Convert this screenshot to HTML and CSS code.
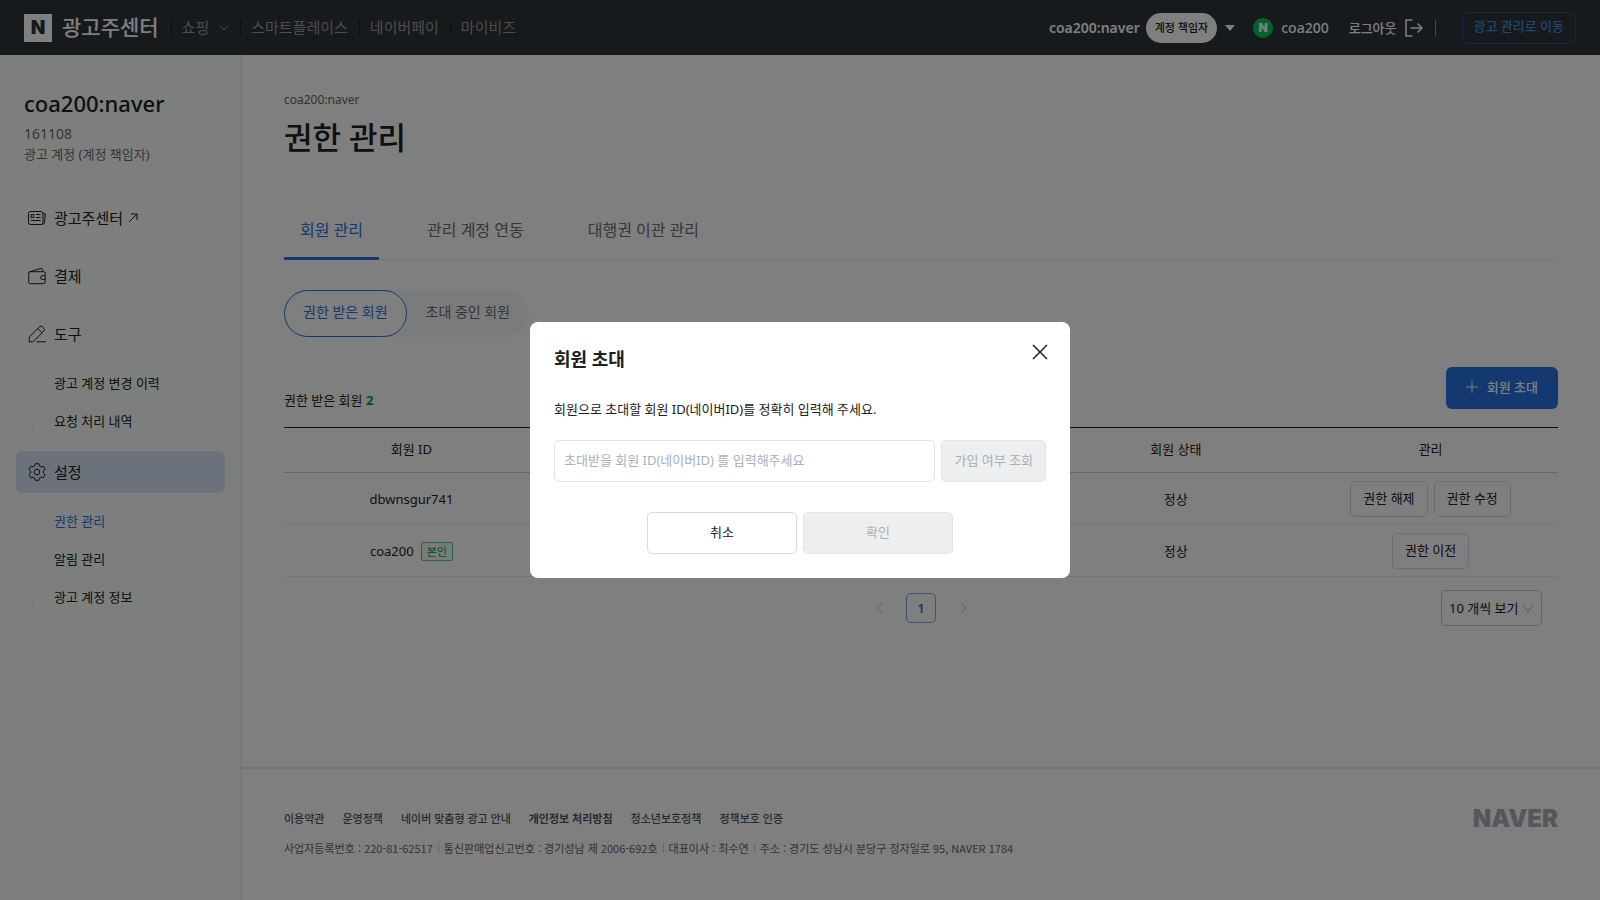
FILE: index.html
```html
<!DOCTYPE html>
<html lang="ko">
<head>
  <meta charset="UTF-8">
  <meta name="viewport" content="width=device-width, initial-scale=1.0">
  <title>권한 관리 - 광고주센터</title>
  <link rel="stylesheet" href="styles.css">
</head>
<body>
  <header class="topbar">
    <a class="logo" href="#"><span class="logo-mark">N</span><span class="logo-text">광고주센터</span></a>
    <nav class="topnav">
      <a href="#">쇼핑 <svg width="10" height="6" viewBox="0 0 10 6"><path d="M.5.5 5 5 9.500.5"/></svg></a>
      <a href="#">스마트플레이스</a>
      <a href="#">네이버페이</a>
      <a href="#">마이비즈</a>
    </nav>
    <div class="account">
      <button class="account-switch" type="button">
        <span>coa200:naver</span>
        <span class="role">계정 책임자</span>
        <svg width="10" height="6" viewBox="0 0 10 6"><path d="M0 0h10L5 6z"/></svg>
      </button>
      <a class="user" href="#"><span class="user-mark">N</span>coa200</a>
      <a class="logout" href="#">로그아웃
        <svg width="18" height="18" viewBox="0 0 18 18"><path d="M7.500 1H1v16h6.500M5.500 9H17M12.500 4.500 17 9l-4.500 4.500"/></svg>
      </a>
      <span class="account-line"></span>
      <a class="btn-go" href="#">광고 관리로 이동</a>
    </div>
  </header>

  <div class="layout">
    <aside class="sidebar">
      <h2>coa200:naver</h2>
      <p>161108</p>
      <p class="account-type">광고 계정 (계정 책임자)</p>
      <nav class="menu">
        <a class="menu-item" href="#">
          <svg width="18" height="18" viewBox="0 0 18 18"><rect x=".5" y="2.500" width="14.500" height="13" rx="2"/><path d="M15 4.500l2.400.5-1 8.500a2.200 2.200 0 0 1-2 2M3 5.500h3v3H3zM8 5.500h4.500M8 8.500h4.500M3 11.500h9.500"/></svg>
          광고주센터
          <svg width="10" height="10" viewBox="0 0 10 10"><path d="M1 9 9 1M3 1h6v6"/></svg>
        </a>
        <a class="menu-item" href="#">
          <svg width="18" height="18" viewBox="0 0 18 18"><rect x=".7" y="4.700" width="16.500" height="12" rx="1.500"/><path d="M1 5l12-3.600a1 1 0 0 1 1.200.7l.7 2.400M17 8.700h-2.800a1.500 1.500 0 0 0-1.500 1.500v.6a1.500 1.500 0 0 0 1.500 1.500H17"/></svg>
          결제
        </a>
        <a class="menu-item" href="#">
          <svg width="18" height="18" viewBox="0 0 18 18"><path d="M1 16.800l.5-5L11.500 1.800a2 2 0 0 1 2.900 0l1.400 1.400a2 2 0 0 1 0 2.900L5.600 16.200q-.5.6-1.200.6zM9.800 3.600l4.200 4.200M8.500 16.800H18"/></svg>
          도구
        </a>
        <ul class="submenu">
          <li><a href="#">광고 계정 변경 이력</a></li>
          <li><a href="#">요청 처리 내역</a></li>
        </ul>
        <a class="menu-item on" href="#">
          <svg width="18" height="18" viewBox="0 0 18 18"><path d="M7.200 .7h3.600l.6 2.300 1.500.9 2.300-.7 1.800 3.100L15.300 8v2l1.700 1.700-1.800 3.100-2.300-.7-1.500.9-.6 2.300H7.200L6.600 15l-1.500-.9-2.300.7L1 11.700 2.700 10V8L1 6.300l1.800-3.100 2.300.7L6.600 3z"/><circle cx="9" cy="9" r="2.800"/></svg>
          설정
        </a>
        <ul class="submenu">
          <li><a class="on" href="#">권한 관리</a></li>
          <li><a href="#">알림 관리</a></li>
          <li><a href="#">광고 계정 정보</a></li>
        </ul>
      </nav>
    </aside>

    <div class="page">
      <main class="content">
        <p class="crumb">coa200:naver</p>
        <h1>권한 관리</h1>

        <nav class="tabs">
          <a class="on" href="#">회원 관리</a>
          <a href="#">관리 계정 연동</a>
          <a href="#">대행권 이관 관리</a>
        </nav>

        <div class="segment">
          <button class="on" type="button">권한 받은 회원</button>
          <button type="button">초대 중인 회원</button>
        </div>

        <div class="list-head">
          <p>권한 받은 회원 <strong>2</strong></p>
          <button class="btn-invite" type="button">
            <svg width="12" height="12" viewBox="0 0 12 12"><path d="M6 0v12M0 6h12"/></svg>
            회원 초대
          </button>
        </div>

        <table class="members">
          <thead>
            <tr><th>회원 ID</th><th></th><th></th><th>회원 상태</th><th>관리</th></tr>
          </thead>
          <tbody>
            <tr>
              <td>dbwnsgur741</td><td></td><td></td><td>정상</td>
              <td><div class="actions"><button class="btn-small" type="button">권한 해제</button><button class="btn-small" type="button">권한 수정</button></div></td>
            </tr>
            <tr>
              <td>coa200<span class="badge">본인</span></td><td></td><td></td><td>정상</td>
              <td><div class="actions"><button class="btn-small" type="button">권한 이전</button></div></td>
            </tr>
          </tbody>
        </table>

        <div class="paging">
          <div class="pages">
            <button type="button" aria-label="이전"><svg width="7" height="12" viewBox="0 0 7 12"><path d="M6.500.5 1 6l5.500 5.500"/></svg></button>
            <button class="on" type="button">1</button>
            <button type="button" aria-label="다음"><svg width="7" height="12" viewBox="0 0 7 12"><path d="M.5.5 6 6 .5 11.500"/></svg></button>
          </div>
          <div class="page-size">
            <select aria-label="페이지 크기"><option>10 개씩 보기</option></select>
            <svg width="10" height="7" viewBox="0 0 10 7"><path d="M.5.5 5 6.500 9.500.5"/></svg>
          </div>
        </div>
      </main>

      <footer class="footer">
        <div>
          <div class="footer-links">
            <a href="#">이용약관</a>
            <a href="#">운영정책</a>
            <a href="#">네이버 맞춤형 광고 안내</a>
            <a class="strong" href="#">개인정보 처리방침</a>
            <a href="#">청소년보호정책</a>
            <a href="#">정책보호 인증</a>
          </div>
          <div class="footer-info">
            <span>사업자등록번호 : 220-81-62517</span>
            <span>통신판매업신고번호 : 경기성남 제 2006-692호</span>
            <span>대표이사 : 최수연</span>
            <span>주소 : 경기도 성남시 분당구 정자일로 95, NAVER 1784</span>
          </div>
        </div>
        <span class="footer-logo">NAVER</span>
      </footer>
    </div>
  </div>

  <div class="overlay">
    <form class="modal" role="dialog" aria-labelledby="modal-title">
      <div class="modal-head">
        <h2 id="modal-title">회원 초대</h2>
        <button class="btn-close" type="button" aria-label="닫기"><svg width="16" height="16" viewBox="0 0 16 16"><path d="M1 1l14 14M15 1 1 15"/></svg></button>
      </div>
      <label for="member-id">회원으로 초대할 회원 ID(네이버ID)를 정확히 입력해 주세요.</label>
      <div class="modal-row">
        <input id="member-id" type="text" placeholder="초대받을 회원 ID(네이버ID) 를 입력해주세요">
        <button class="btn" type="button" disabled>가입 여부 조회</button>
      </div>
      <div class="modal-foot">
        <button class="btn" type="button">취소</button>
        <button class="btn" type="submit" disabled>확인</button>
      </div>
    </form>
  </div>
</body>
</html>
```
FILE: styles.css
```css
* { margin: 0; padding: 0; box-sizing: border-box; }
body { background: #fff; color: #202020; font: 13px/20px 'Noto Sans', 'Noto Sans CJK KR', sans-serif; min-height: 100vh; display: flex; flex-direction: column; }
a { color: inherit; text-decoration: none; }
ul { list-style: none; }
button, input, select { font: inherit; color: inherit; background: none; border: none; }
button { cursor: pointer; white-space: nowrap; }
svg { flex: none; fill: none; stroke: currentColor; }

/* top bar */
.topbar { background: #2f353b; color: #fff; height: 55px; padding: 0 24px; display: flex; align-items: center; white-space: nowrap; }
.logo { display: flex; align-items: center; gap: 10px; margin-right: 12px; }
.logo-mark { width: 28px; height: 28px; background: #fff; color: #2f353b; font: 900 19px/28px Inter, sans-serif; text-align: center; }
.logo-text { font-size: 21px; line-height: 26px; padding-bottom: 2px; font-weight: 500; }
.topnav { display: flex; align-items: center; color: #999; font-size: 15px; }
.topnav a { display: flex; align-items: center; gap: 10px; line-height: 15px; padding: 0 11px 0 10px; border-left: 1px solid #14181c; }
.account { margin-left: auto; display: flex; align-items: center; }
.account-switch { display: flex; align-items: center; font-size: 14px; font-weight: 600; }
.role { background: #fff; color: #202020; height: 30px; line-height: 29px; padding: 0 9px; margin: 0 8px 0 6px; border-radius: 15px; font-size: 11px; font-weight: 500; }
.account-switch svg { fill: #fff; stroke: none; }
.user { display: flex; align-items: center; gap: 8px; margin-left: 18px; font-size: 14px; font-weight: 500; }
.user-mark { width: 20px; height: 20px; border-radius: 50%; background: #00c45a; font: 900 12px/20px Inter, sans-serif; text-align: center; }
.logout { display: flex; align-items: center; gap: 8px; margin-left: 20px; font-weight: 500; }
.logout svg { stroke-width: 1.500; }
.account-line { width: 1px; height: 16px; background: #8f8f8f; margin: 0 26px 0 12px; }
.btn-go { height: 32px; line-height: 27px; padding: 0 11px; border: 1px solid #2a5580; border-radius: 5px; color: #3d8fe0; font-weight: 500; }

/* sidebar */
.layout { flex: 1; display: flex; }
.sidebar { flex: none; width: 242px; padding: 32px 16px; background: #f9fefb; border-right: 1px solid #dfe3ea; }
.sidebar h2 { padding: 0 8px; margin-bottom: 5px; font-size: 22px; line-height: 32px; font-weight: 500; }
.sidebar p { padding: 0 8px; font-size: 14px; color: #6c6c6c; white-space: nowrap; }
.sidebar .account-type { font-size: 13px; }
.menu { margin-top: 33px; }
.menu-item { display: flex; align-items: center; gap: 8px; height: 42px; padding: 0 12px; margin-bottom: 16px; border-radius: 6px; font-size: 15px; }
.menu-item svg:last-child:not(:first-child) { margin-left: -3px; }
.menu-item.on { background: #d8e4f8; }
.submenu { margin: 18px 0 20px 16px; padding-left: 21px; border-left: 1px solid #f0f2f1; display: flex; flex-direction: column; gap: 18px; }
.submenu .on { color: #2673e0; }

/* content */
.page { flex: 1; min-width: 0; display: flex; flex-direction: column; }
.content { flex: 1; padding: 35px 42px; }
.crumb { font-size: 12px; color: #666; }
.content h1 { margin-top: 5px; font-size: 31px; line-height: 44px; font-weight: 500; }
.tabs { display: flex; gap: 32px; margin-top: 46px; border-bottom: 1px solid #ececec; font-size: 16px; color: #6c6c6c; }
.tabs a { height: 55px; line-height: 51px; padding: 0 16px; margin-bottom: -1px; }
.tabs .on { color: #2673e0; border-bottom: 3px solid #2673e0; }
.segment { display: flex; width: fit-content; margin-top: 30px; border-radius: 24px; background: #f5f7fa; color: #6c6c6c; }
.segment button { height: 47px; padding: 0 18px 3px; border: 1px solid transparent; border-radius: 24px; font-size: 14px; }
.segment .on { background: #fff; border-color: #2673e0; color: #2673e0; }
.list-head { display: flex; justify-content: space-between; align-items: flex-end; margin-top: 30px; }
.list-head p { line-height: 18px; }
.list-head strong { color: #009a5a; }
.btn-invite { height: 42px; padding: 0 20px 2px; display: flex; align-items: center; gap: 9px; background: #2673e0; color: #fff; border-radius: 6px; font-weight: 500; }

.members { width: 100%; margin-top: 18px; table-layout: fixed; border-collapse: collapse; border-top: 1px solid #202020; text-align: center; }
.members th { height: 45px; padding-bottom: 2px; font-weight: 400; border-bottom: 1px solid #ccc; }
.members td { height: 52px; border-bottom: 1px solid #ececec; }
.badge { display: inline-block; margin-left: 7px; padding: 0 5px; border: 1px solid #5cbf98; border-radius: 2px; background: #eafaf3; color: #009a5a; font-size: 11px; line-height: 17px; }
.actions { display: flex; justify-content: center; gap: 6px; }
.btn-small { height: 36px; padding: 0 12px 2px; border: 1px solid #d8dae0; border-radius: 5px; }
.paging { display: grid; grid-template-columns: 1fr auto 1fr; align-items: center; margin-top: 13px; }
.pages { grid-column: 2; display: flex; gap: 12px; color: #c0c0c0; }
.pages button { width: 30px; height: 30px; display: flex; align-items: center; justify-content: center; }
.pages .on { border: 1px solid #7aa9ec; border-radius: 5px; color: #2673e0; font-weight: 600; }
.page-size { position: relative; justify-self: end; margin-right: 16px; }
.page-size select { appearance: none; width: 101px; height: 36px; padding: 0 7px; border: 1px solid #c4c6cc; border-radius: 4px; }
.page-size svg { position: absolute; right: 9px; top: 15px; color: #a0a0a0; pointer-events: none; }

/* footer */
.footer { display: flex; justify-content: space-between; padding: 40px 42px; border-top: 2px solid #e4e6e8; color: #50545c; font-size: 11px; white-space: nowrap; }
.footer-links { display: flex; gap: 18px; font-weight: 500; }
.footer-links .strong { font-weight: 700; }
.footer-info { display: flex; margin: 9px 0 2px; color: #666; font-family: 'Noto Sans CJK KR', sans-serif; }
.footer-info span + span::before { content: ''; display: inline-block; width: 1px; height: 10px; margin: 0 5px; background: #d0d0d0; }
.footer-logo { font: 900 24px/20px Inter, sans-serif; color: #a8b0ba; }

/* invite modal */
.overlay { position: fixed; inset: 0; background: rgba(0,0,0,0.5); display: flex; align-items: center; justify-content: center; }
.modal { width: 540px; padding: 22px 24px 24px; background: #fff; border-radius: 8px; }
.modal-head { display: flex; justify-content: space-between; align-items: flex-start; margin-bottom: 25px; }
.modal h2 { font-size: 18px; line-height: 30px; font-weight: 700; }
.btn-close { width: 16px; height: 16px; margin-right: -2px; }
.btn-close svg { display: block; stroke-width: 1.500; }
.modal label { display: block; line-height: 20px; }
.modal-row { display: flex; gap: 6px; margin: 21px 0 30px; }
.modal input { flex: 1; min-width: 0; height: 42px; padding: 0 9px 2px; border: 1px solid #e2e3e8; border-radius: 5px; }
.modal input::placeholder { color: #a9b0b8; opacity: 1; }
.btn { height: 42px; padding: 0 12px 2px; border: 1px solid #d8dae2; border-radius: 5px; }
.btn:disabled { background: #edeef0; border-color: #e2e4e8; color: #a9b0b8; }
.modal-foot { display: flex; justify-content: center; gap: 6px; }
.modal-foot .btn { width: 150px; }
```
